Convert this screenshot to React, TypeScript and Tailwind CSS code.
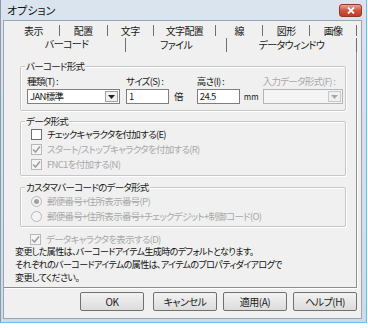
import React from 'react';

const font = { fontFamily: '"Noto Sans CJK JP", "Noto Sans", sans-serif', fontFeatureSettings: '"palt"' };

const Check = ({ checked, disabled }: { checked?: boolean; disabled?: boolean }) => (
  <span className={`w-[11px] h-[11px] border flex items-center justify-center shrink-0 ${disabled ? 'border-[#b8b8b8] bg-[#f4f4f4]' : 'border-[#707070] bg-white'}`}>
    {checked && (
      <svg width="9" height="9" viewBox="0 0 9 9">
        <path d="M1 4.5 L3.5 7 L8 1.5" fill="none" stroke={disabled ? '#a0a0a0' : '#222'} strokeWidth="1.6" />
      </svg>
    )}
  </span>
);

const Radio = ({ checked }: { checked?: boolean }) => (
  <span className="w-[11px] h-[11px] rounded-full border border-[#b8b8b8] bg-[#f4f4f4] flex items-center justify-center shrink-0">
    {checked && <span className="w-[5px] h-[5px] rounded-full bg-[#a0a0a0]" />}
  </span>
);

const Group = ({ title, className, children }: { title: string; className?: string; children: React.ReactNode }) => (
  <div className={`relative border border-[#c4c8cc] shadow-[inset_1px_1px_0_#fff,1px_1px_0_#fff] rounded-[2px] ${className ?? ''}`}>
    <span className="absolute left-[4px] top-[-8px] bg-[#f0f0f0] px-[1px] leading-[14px] text-[#1a1a1a]">{title}</span>
    {children}
  </div>
);

const Arrow = ({ color }: { color: string }) => (
  <svg width="7" height="4" viewBox="0 0 7 4"><path d="M0 0 H7 L3.5 4 Z" fill={color} /></svg>
);

export default function App() {
  const row1 = [
    ['表示', 52], ['配置', 48], ['文字', 46], ['文字配置', 63], ['線', 47], ['図形', 47], ['画像', 47],
  ] as const;
  const row2 = [['バーコード', 119], ['ファイル', 101], ['データウィンドウ', 131]] as const;

  return (
    <div className="w-[368px] h-[328px] bg-white text-[9.5px] tracking-[-0.7px] text-[#1a1a1a]" style={font}>
      <div className="w-[367px] h-[323px] flex flex-col bg-gradient-to-b from-[#d9e4ef] to-[#cddbe9] border-r border-b border-[#5fc4ee] border-l border-l-[#8a9aab]">
        {/* title bar */}
        <div className="h-[20px] shrink-0 flex items-center justify-between pl-[6px] pr-[4px]">
          <span className="text-[11px] tracking-[0px] text-[#111] leading-none">オプション</span>
          <div className="w-[23px] h-[13px] rounded-[3px] border border-[#8b3a2e] bg-gradient-to-b from-[#e8a493] via-[#d0533c] to-[#c13b24] flex items-center justify-center">
            <svg width="8" height="7" viewBox="0 0 8 7">
              <path d="M1 0.5 L7 6.5 M7 0.5 L1 6.5" stroke="#fff" strokeWidth="1.8" />
            </svg>
          </div>
        </div>

        {/* client */}
        <div className="flex-1 ml-[2px] mr-[4px] mb-[3px] bg-[#f0f0f0] border border-[#9aa5b2] flex flex-col">
          {/* tabs */}
          <div className="pl-[4px] pr-[4px] pt-[3px] flex flex-col text-[10px] tracking-[-0.6px]">
            <div className="flex h-[13px] items-center">
              {row1.map(([t, w]) => (
                <div key={t} style={{ width: w }} className="h-[11px] flex items-center justify-center leading-none border-r border-[#6f6f6f]">
                  {t}
                </div>
              ))}
            </div>
            <div className="flex h-[15px] items-center">
              {row2.map(([t, w], i) => (
                <div key={t} style={{ width: w }} className={`h-[14px] flex items-center justify-center leading-none border-r border-[#6f6f6f] ${i === 0 ? 'pb-[1px]' : ''}`}>
                  {t}
                </div>
              ))}
            </div>
          </div>

          {/* panel */}
          <div className="mr-[4px] h-[236px] border-r border-b border-[#8d8d8d] shadow-[1px_1px_0_#fff] pt-[14px] pl-[16px] pr-[10px]">
            <Group title="バーコード形式" className="h-[45px]">
              <div className="flex pl-[6px] pt-[8px] gap-[6px]">
                <div className="flex flex-col gap-[2px]">
                  <span className="leading-[12px]">種類(T) :</span>
                  <div className="w-[93px] h-[15px] bg-white border border-[#7f7f7f] flex items-center justify-between pl-[2px]">
                    <span className="leading-none">JAN標準</span>
                    <span className="w-[13px] h-[11px] mr-[1px] border border-[#a0a0a0] bg-[#f0f0f0] flex items-center justify-center"><Arrow color="#222" /></span>
                  </div>
                </div>
                <div className="flex flex-col gap-[2px]">
                  <span className="leading-[12px]">サイズ(S) :</span>
                  <div className="flex items-center gap-[5px]">
                    <div className="w-[43px] h-[15px] bg-white border border-[#7f7f7f] pl-[2px] leading-[13px]">1</div>
                    <span>倍</span>
                  </div>
                </div>
                <div className="flex flex-col gap-[2px] ml-[8px]">
                  <span className="leading-[12px]">高さ(I) :</span>
                  <div className="flex items-center gap-[4px]">
                    <div className="w-[43px] h-[15px] bg-white border border-[#7f7f7f] pl-[2px] leading-[13px]">24.5</div>
                    <span className="text-[8px] tracking-[0px]">mm</span>
                  </div>
                </div>
                <div className="flex flex-col gap-[2px] ml-[-2px]">
                  <span className="leading-[12px] text-[#a8a8a8]">入力データ形式(F) :</span>
                  <div className="w-[80px] h-[15px] bg-[#f4f4f4] border border-[#b5b5b5] flex items-center justify-end">
                    <span className="w-[13px] h-[11px] mr-[1px] border border-[#c8c8c8] bg-[#f0f0f0] flex items-center justify-center"><Arrow color="#a8a8a8" /></span>
                  </div>
                </div>
              </div>
            </Group>

            <Group title="データ形式" className="h-[55px] mt-[10px]">
              <div className="flex flex-col pl-[10px] pt-[6px] gap-[3px]">
                <div className="flex items-center gap-[5px] h-[12px]"><Check /><span>チェックキャラクタを付加する(E)</span></div>
                <div className="flex items-center gap-[5px] h-[12px] text-[#a8a8a8]"><Check checked disabled /><span>スタート/ストップキャラクタを付加する(R)</span></div>
                <div className="flex items-center gap-[5px] h-[12px] text-[#a8a8a8]"><Check checked disabled /><span>FNC1を付加する(N)</span></div>
              </div>
            </Group>

            <Group title="カスタマバーコードのデータ形式" className="h-[40px] mt-[11px]">
              <div className="flex flex-col pl-[10px] pt-[7px] gap-[3px] text-[#a8a8a8]">
                <div className="flex items-center gap-[5px] h-[12px]"><Radio checked /><span>郵便番号+住所表示番号(P)</span></div>
                <div className="flex items-center gap-[5px] h-[12px]"><Radio /><span>郵便番号+住所表示番号+チェックデジット+制御コード(O)</span></div>
              </div>
            </Group>

            <div className="flex items-center gap-[5px] h-[12px] mt-[6px] pl-[10px] text-[#a8a8a8]"><Check checked disabled /><span>データキャラクタを表示する(D)</span></div>

            <div className="ml-[-5px] text-[9px] tracking-[-0.6px] leading-[13px] text-[#111]">
              <div>変更した属性は、バーコードアイテム生成時のデフォルトとなります。</div>
              <div>それぞれのバーコードアイテムの属性は、アイテムのプロパティダイアログで</div>
              <div>変更してください。</div>
            </div>
          </div>

          {/* buttons */}
          <div className="flex justify-end gap-[6px] mt-[4px] mr-[4px] text-[10px] tracking-[-0.5px]">
            {['OK', 'キャンセル', '適用(A)', 'ヘルプ(H)'].map((b, i) => (
              <div key={b} className={`w-[64px] ${i === 0 ? 'mr-[3px]' : ''} h-[19px] border border-[#707070] rounded-[2px] bg-gradient-to-b from-[#f2f2f2] to-[#dcdcdc] flex items-center justify-center leading-none`}>
                {b}
              </div>
            ))}
          </div>
        </div>
      </div>
    </div>
  );
}
